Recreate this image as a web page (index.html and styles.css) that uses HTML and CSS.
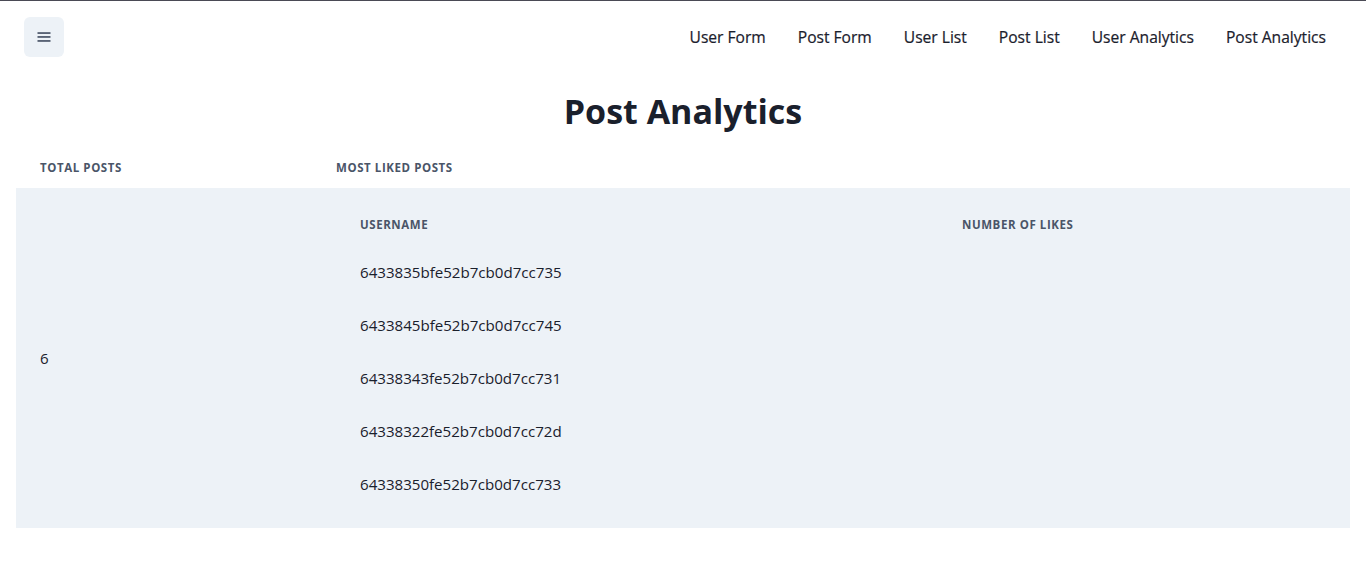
FILE: index.html
```html
<!DOCTYPE html>
<html lang="en">
<head>
<meta charset="utf-8">
<title>Post Analytics</title>
<link rel="stylesheet" href="styles.css">
</head>
<body>
<nav class="nav">
  <button class="menu-btn" aria-label="Menu">
    <svg width="14" height="12" viewBox="0 0 14 12" aria-hidden="true">
      <rect x="0.5" y="1.2" width="13" height="1.7" fill="#4A5568"/>
      <rect x="0.5" y="5.1" width="13" height="1.7" fill="#4A5568"/>
      <rect x="0.5" y="9.1" width="13" height="1.7" fill="#4A5568"/>
    </svg>
  </button>
  <ul class="links">
    <li><a href="#">User Form</a></li>
    <li><a href="#">Post Form</a></li>
    <li><a href="#">User List</a></li>
    <li><a href="#">Post List</a></li>
    <li><a href="#">User Analytics</a></li>
    <li><a href="#">Post Analytics</a></li>
  </ul>
</nav>
<h1 class="title">Post Analytics</h1>
<div class="table-wrap">
<table class="tbl outer">
  <thead>
    <tr><th class="col-total">Total Posts</th><th>Most Liked Posts</th></tr>
  </thead>
  <tbody>
    <tr class="row">
      <td class="col-total">6</td>
      <td class="nested-cell">
        <table class="tbl inner">
          <thead><tr><th class="col-user">Username</th><th>Number of Likes</th></tr></thead>
          <tbody>
            <tr><td>6433835bfe52b7cb0d7cc735</td><td></td></tr>
            <tr><td>6433845bfe52b7cb0d7cc745</td><td></td></tr>
            <tr><td>64338343fe52b7cb0d7cc731</td><td></td></tr>
            <tr><td>64338322fe52b7cb0d7cc72d</td><td></td></tr>
            <tr><td>64338350fe52b7cb0d7cc733</td><td></td></tr>
          </tbody>
        </table>
      </td>
    </tr>
  </tbody>
</table>
</div>
</body>
</html>
```
FILE: styles.css
```css
* { box-sizing: border-box; }
html, body { margin: 0; padding: 0; }
body {
  font-family: "Segoe UI", "Open Sans", sans-serif;
  color: #1A202C;
  background: #fff;
  border-top: 1px solid #4a4a55;
}
.nav {
  display: flex;
  align-items: center;
  justify-content: space-between;
  padding: 16px 24px;
}
.menu-btn {
  width: 40px;
  height: 40px;
  border: 0;
  border-radius: 6px;
  background: #EDF2F7;
  display: flex;
  align-items: center;
  justify-content: center;
  padding: 0;
}
.links {
  list-style: none;
  margin: 0;
  padding: 0 16px 0 0;
  display: flex;
  gap: 32px;
}
.links a {
  color: #1A202C;
  text-decoration: none;
  font-size: 15.6px;
  font-weight: 500;
  -webkit-text-stroke: 0.2px #1A202C;
}
.title {
  text-align: center;
  font-size: 34px;
  font-weight: 700;
  line-height: 1.2;
  margin: 18px 0 16px;
}
.table-wrap { padding: 0 16px; }
.tbl {
  width: 100%;
  border-collapse: collapse;
}
.tbl th {
  text-transform: uppercase;
  font-size: 11.5px;
  font-weight: 700;
  letter-spacing: 0.05em;
  color: #4A5568;
  text-align: left;
  padding: 12px 24px;
  line-height: 16px;
  border-bottom: 1px solid #EDF2F7;
}
.tbl td {
  padding: 16px 24px;
  font-size: 15.1px;
  line-height: 20px;
  border-bottom: 1px solid #EDF2F7;
  text-align: left;
}
.outer .col-total { width: 296px; }
.row { background: #EDF2F7; }
.row > td { vertical-align: middle; }
.inner .col-user { width: 602px; }
```
